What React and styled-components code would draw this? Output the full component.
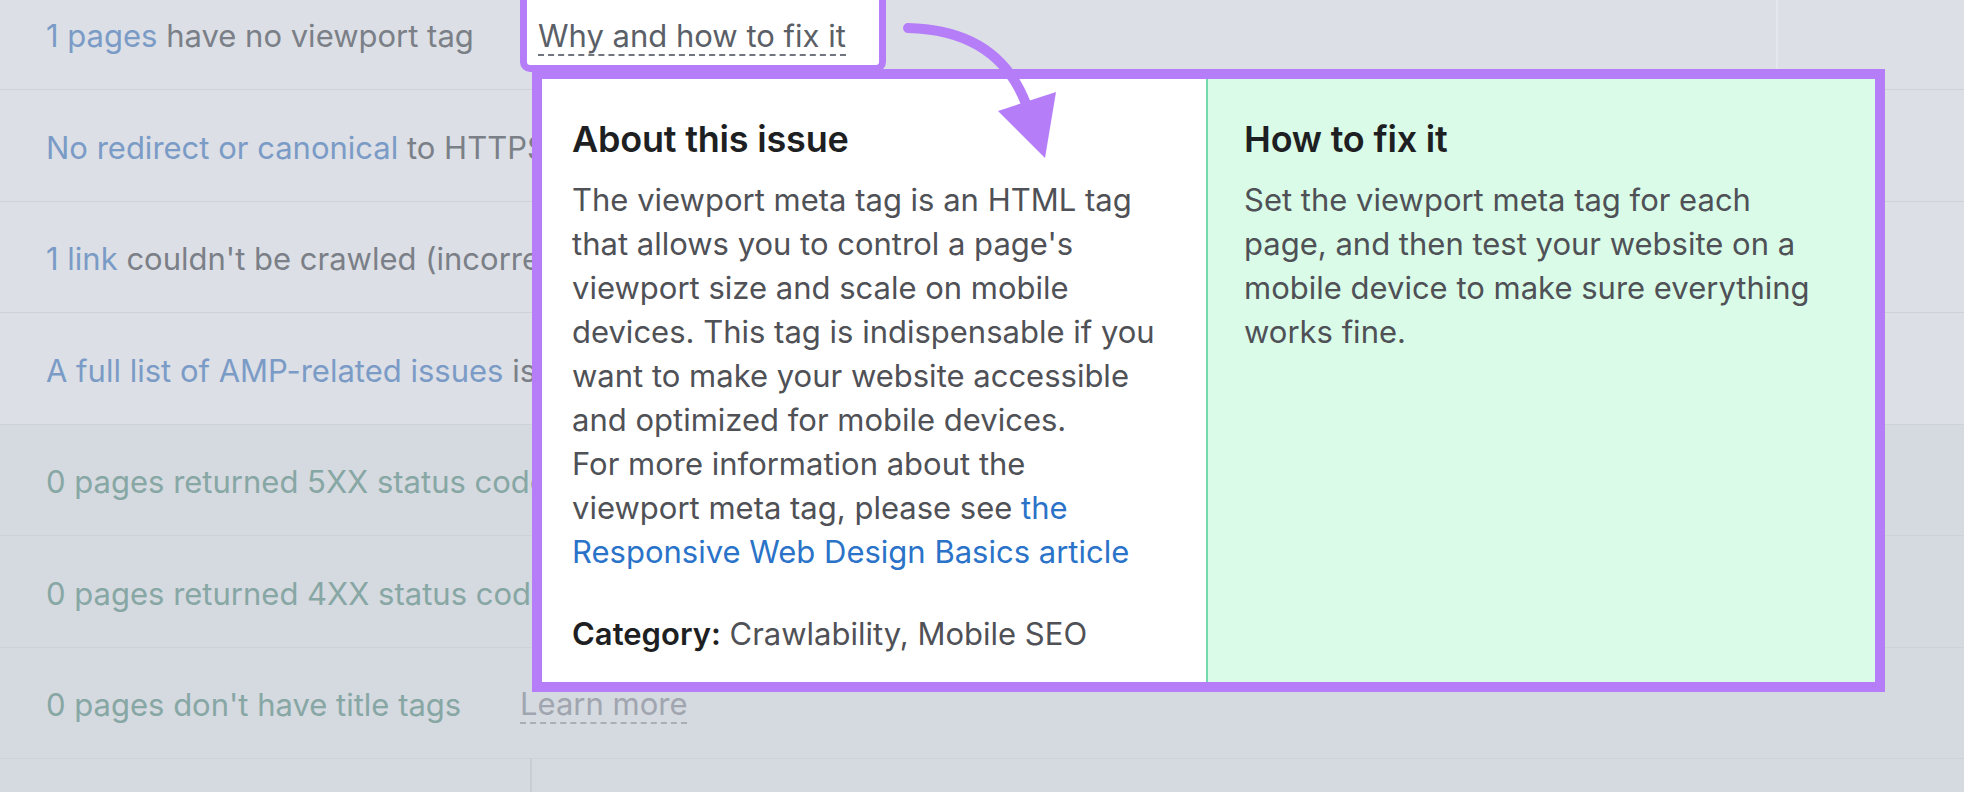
import React from 'react';
import styled, { createGlobalStyle } from 'styled-components';

const GlobalStyle = createGlobalStyle`
  html, body {
    margin: 0;
    padding: 0;
    background: #d5d9e0;
    overflow: hidden;
  }
  * {
    box-sizing: border-box;
  }
`;

const PURPLE = '#b57ef8';

const Page = styled.div`
  position: relative;
  width: 1964px;
  height: 792px;
  overflow: hidden;
  background: #d5d9e0;
  font-family: Inter, 'Noto Sans', sans-serif;
`;

const List = styled.div`
  margin-top: -21.5px;
`;

const Row = styled.div`
  display: grid;
  grid-template-columns: 517px 1259px 1fr;
  height: 111.5px;
  border-bottom: 1px solid #cdd1d8;
  background: ${(p) => (p.tone === 'dark' ? '#d5d9e0' : '#dcdfe5')};
`;

const Issue = styled.div`
  display: flex;
  align-items: center;
  padding-left: 46px;
  padding-top: 4px;
  font-size: 31px;
  white-space: pre;
  color: ${(p) => (p.muted ? '#87a7a4' : '#7b7f87')};
`;

const Count = styled.span`
  color: #7b9bc7;
`;

const LinkCell = styled.div`
  display: flex;
  align-items: center;
  padding-left: 3px;
  padding-top: 4px;
  border-left: ${(p) => (p.ruled ? '2px solid #c8ccd3' : 'none')};
  margin-left: ${(p) => (p.ruled ? '13px' : '0')};
`;

const EndCell = styled.div`
  border-left: ${(p) => (p.ruled ? '2px solid #e4e7ec' : 'none')};
`;

const LinkBox = styled.div`
  align-self: start;
  display: flex;
  align-items: flex-end;
  width: 366px;
  height: 93.5px;
  margin-top: -4px;
  padding: 0 0 9px 11px;
  background: #fff;
  border: 7px solid ${PURPLE};
  border-top: none;
  border-radius: 0 0 10px 10px;
`;

const Dashed = styled.span`
  font-size: 31px;
  line-height: 1.2;
  color: ${(p) => (p.faint ? '#a0a5af' : '#5b5f67')};
  border-bottom: 2px dashed ${(p) => (p.faint ? '#a9aeb7' : '#70747c')};
  white-space: nowrap;
`;

const Popup = styled.div`
  position: absolute;
  left: 532px;
  top: 69px;
  width: 1353px;
  height: 623px;
  border: 10px solid ${PURPLE};
  display: grid;
  grid-template-columns: 664px 1fr;
  grid-template-rows: 603px;
  z-index: 2;
`;

const Panel = styled.div`
  overflow: hidden;
  padding: ${(p) => (p.fix ? '38px 36px 0' : '38px 30px 0')};
  background: ${(p) => (p.fix ? '#d9fbe8' : '#fff')};
  border-left: ${(p) => (p.fix ? '2px solid #74d9ae' : 'none')};
`;

const Title = styled.h3`
  margin: 0 0 17px;
  font-size: 36px;
  line-height: 44px;
  font-weight: 600;
  letter-spacing: -0.2px;
  color: #1e1f22;
  white-space: nowrap;
`;

const Body = styled.p`
  margin: 0;
  font-size: 31px;
  line-height: 44px;
  color: #4f5156;
  white-space: nowrap;
`;

const Link = styled.span`
  color: #2a73c8;
`;

const Category = styled.p`
  margin: 38px 0 0;
  font-size: 31px;
  line-height: 44px;
  color: #4f5156;
  white-space: nowrap;
  b {
    font-weight: 600;
    color: #1e1f22;
  }
`;

const Arrow = styled.svg`
  position: absolute;
  left: 0;
  top: 0;
  z-index: 3;
  pointer-events: none;
`;

const rows = [
  { tone: 'light', count: 'No redirect or canonical', text: ' to HTTPS homepage from HTTP version' },
  { tone: 'light', count: '1 link', text: " couldn't be crawled (incorrect URL format)" },
  { tone: 'light', count: 'A full list of AMP-related issues', text: ' is available in the AMP Checks report' },
  { tone: 'dark', muted: true, text: '0 pages returned 5XX status code' },
  { tone: 'dark', muted: true, text: '0 pages returned 4XX status code' },
];

export default function App() {
  return (
    <Page>
      <GlobalStyle />
      <List>
        <Row tone="light">
          <Issue>
            <span>
              <Count>1 pages</Count> have no viewport tag
            </span>
          </Issue>
          <LinkCell>
            <LinkBox>
              <Dashed>Why and how to fix it</Dashed>
            </LinkBox>
          </LinkCell>
          <EndCell ruled />
        </Row>
        {rows.map((r, i) => (
          <Row key={i} tone={r.tone}>
            <Issue muted={r.muted}>
              <span>
                {r.count && <Count>{r.count}</Count>}
                {r.text}
              </span>
            </Issue>
            <LinkCell />
            <EndCell />
          </Row>
        ))}
        <Row tone="dark">
          <Issue muted>0 pages don't have title tags</Issue>
          <LinkCell>
            <Dashed faint>Learn more</Dashed>
          </LinkCell>
          <EndCell />
        </Row>
        <Row tone="dark">
          <Issue />
          <LinkCell ruled />
          <EndCell />
        </Row>
      </List>

      <Popup>
        <Panel>
          <Title>About this issue</Title>
          <Body>
            The viewport meta tag is an HTML tag
            <br />
            that allows you to control a page's
            <br />
            viewport size and scale on mobile
            <br />
            devices. This tag is indispensable if you
            <br />
            want to make your website accessible
            <br />
            and optimized for mobile devices.
            <br />
            For more information about the
            <br />
            viewport meta tag, please see <Link>the</Link>
            <br />
            <Link>Responsive Web Design Basics article</Link>
          </Body>
          <Category>
            <b>Category:</b> Crawlability, Mobile SEO
          </Category>
        </Panel>
        <Panel fix>
          <Title>How to fix it</Title>
          <Body>
            Set the viewport meta tag for each
            <br />
            page, and then test your website on a
            <br />
            mobile device to make sure everything
            <br />
            works fine.
          </Body>
        </Panel>
      </Popup>

      <Arrow width="1964" height="792" viewBox="0 0 1964 792">
        <path d="M908 28 Q 998 30 1026 104" fill="none" stroke={PURPLE} strokeWidth="10" strokeLinecap="round" />
        <polygon points="998,111 1056,92 1045,158" fill={PURPLE} />
      </Arrow>
    </Page>
  );
}
